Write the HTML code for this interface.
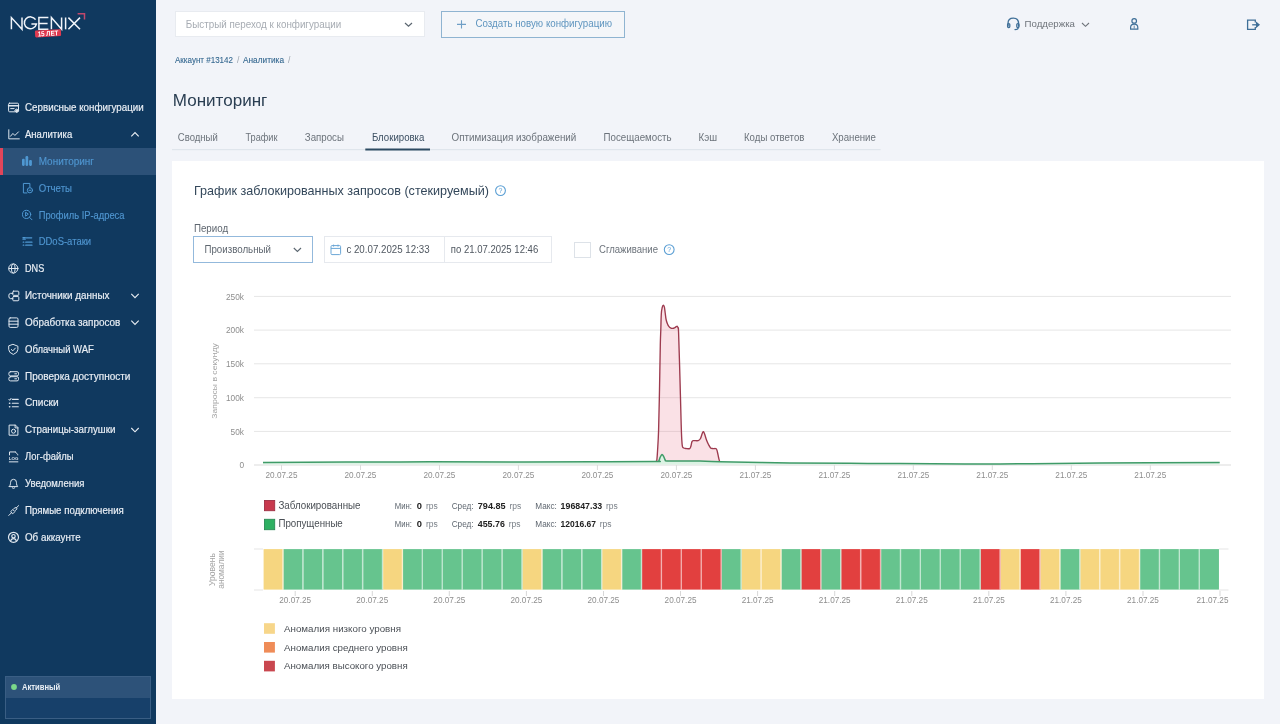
<!DOCTYPE html>
<html><head><meta charset="utf-8">
<style>
*{margin:0;padding:0;box-sizing:border-box}
html,body{width:1280px;height:724px;overflow:hidden;background:#f2f4f9;font-family:"Liberation Sans",sans-serif}
.a{position:absolute}
svg{position:absolute;left:0;top:0;will-change:transform}
</style></head><body>
<div class="a" style="left:0;top:0;width:156px;height:724px;background:#10395f"></div>
<div class="a" style="left:0;top:148px;width:156px;height:27px;background:#2c5178"></div>
<div class="a" style="left:0;top:148px;width:2.5px;height:27px;background:#e2455a"></div>
<div class="a" style="left:5px;top:676px;width:146px;height:43px;border:1px solid #3a5e84;background:#17406a"></div>
<div class="a" style="left:6px;top:677px;width:144px;height:21px;background:#2d5279"></div>
<div class="a" style="left:175px;top:10.8px;width:250px;height:26.6px;background:#fff;border:1px solid #e8ebf0"></div>
<div class="a" style="left:441px;top:11px;width:184px;height:27px;border:1px solid #8fb4d1;background:#f4f6f9"></div>
<div class="a" style="left:172px;top:161px;width:1092px;height:538px;background:#fff"></div>
<div class="a" style="left:193px;top:236px;width:120px;height:27px;border:1px solid #93b9dc;background:#fff"></div>
<div class="a" style="left:324px;top:236px;width:228px;height:27px;border:1px solid #e6e9ee;background:#fff"></div>
<div class="a" style="left:444px;top:236px;width:1px;height:27px;background:#e6e9ee"></div>
<div class="a" style="left:574px;top:242px;width:17px;height:16px;border:1px solid #dde2e8;background:#fff"></div>
<svg width="1280" height="724" viewBox="0 0 1280 724" font-family="Liberation Sans">
<g fill="none" stroke="#f1f5fa" stroke-width="1.5">
<path d="M11.4 29.3V17.6L22 29.2V17.6"/>
<path d="M35.6 19.6A6.1 5.9 0 1 0 36.4 24.1H31.4"/>
<path d="M48.4 17.6H38.9V29.2H48.4M38.9 23.5H47.6"/>
<path d="M51.4 29.3V17.6L61.6 29.2V17.6"/>
<path d="M65.6 17.5V29.3"/>
<path d="M68.4 17.6L80 29.2M80 17.6L68.4 29.2"/>
</g>
<path d="M77.6 13.7H84.5V19.6" fill="none" stroke="#c0486c" stroke-width="1.5"/>
<g transform="rotate(-3.3 48 33)"><rect x="35" y="29.8" width="26" height="7" rx="1.2" fill="#e03a50"/>
<text x="48" y="35.9" font-size="7" font-weight="bold" fill="#fff" text-anchor="middle" textLength="20.5" lengthAdjust="spacingAndGlyphs">15 ЛЕТ</text></g>
<text x="25.00" y="111.10" font-size="10.1" fill="#e9eef4" textLength="118.70" lengthAdjust="spacingAndGlyphs" stroke="#e9eef4" stroke-width="0.18">Сервисные конфигурации</text>
<text x="25.00" y="137.95" font-size="10.1" fill="#e9eef4" textLength="47.20" lengthAdjust="spacingAndGlyphs" stroke="#e9eef4" stroke-width="0.18">Аналитика</text>
<path d="M131.3 136.4L135 132.6L138.7 136.4" fill="none" stroke="#e9eef4" stroke-width="1.1"/>
<text x="38.70" y="164.80" font-size="10.1" fill="#4f95cf" textLength="55.30" lengthAdjust="spacingAndGlyphs" stroke="#4f95cf" stroke-width="0.15">Мониторинг</text>
<text x="38.70" y="191.65" font-size="10.1" fill="#4f95cf" textLength="33.30" lengthAdjust="spacingAndGlyphs" stroke="#4f95cf" stroke-width="0.15">Отчеты</text>
<text x="38.70" y="218.50" font-size="10.1" fill="#4f95cf" textLength="85.80" lengthAdjust="spacingAndGlyphs" stroke="#4f95cf" stroke-width="0.15">Профиль IP-адреса</text>
<text x="38.70" y="245.35" font-size="10.1" fill="#4f95cf" textLength="52.40" lengthAdjust="spacingAndGlyphs" stroke="#4f95cf" stroke-width="0.15">DDoS-атаки</text>
<text x="25.00" y="272.20" font-size="10.1" fill="#e9eef4" textLength="19.20" lengthAdjust="spacingAndGlyphs" stroke="#e9eef4" stroke-width="0.18">DNS</text>
<text x="25.00" y="299.05" font-size="10.1" fill="#e9eef4" textLength="84.50" lengthAdjust="spacingAndGlyphs" stroke="#e9eef4" stroke-width="0.18">Источники данных</text>
<path d="M131.3 293.8L135 297.6L138.7 293.8" fill="none" stroke="#e9eef4" stroke-width="1.1"/>
<text x="25.00" y="325.90" font-size="10.1" fill="#e9eef4" textLength="95.40" lengthAdjust="spacingAndGlyphs" stroke="#e9eef4" stroke-width="0.18">Обработка запросов</text>
<path d="M131.3 320.6L135 324.4L138.7 320.6" fill="none" stroke="#e9eef4" stroke-width="1.1"/>
<text x="25.00" y="352.75" font-size="10.1" fill="#e9eef4" textLength="68.90" lengthAdjust="spacingAndGlyphs" stroke="#e9eef4" stroke-width="0.18">Облачный WAF</text>
<text x="25.00" y="379.60" font-size="10.1" fill="#e9eef4" textLength="105.40" lengthAdjust="spacingAndGlyphs" stroke="#e9eef4" stroke-width="0.18">Проверка доступности</text>
<text x="25.00" y="406.45" font-size="10.1" fill="#e9eef4" textLength="33.60" lengthAdjust="spacingAndGlyphs" stroke="#e9eef4" stroke-width="0.18">Списки</text>
<text x="25.00" y="433.30" font-size="10.1" fill="#e9eef4" textLength="90.40" lengthAdjust="spacingAndGlyphs" stroke="#e9eef4" stroke-width="0.18">Страницы-заглушки</text>
<path d="M131.3 428.0L135 431.8L138.7 428.0" fill="none" stroke="#e9eef4" stroke-width="1.1"/>
<text x="25.00" y="460.15" font-size="10.1" fill="#e9eef4" textLength="48.40" lengthAdjust="spacingAndGlyphs" stroke="#e9eef4" stroke-width="0.18">Лог-файлы</text>
<text x="25.00" y="487.00" font-size="10.1" fill="#e9eef4" textLength="59.40" lengthAdjust="spacingAndGlyphs" stroke="#e9eef4" stroke-width="0.18">Уведомления</text>
<text x="25.00" y="513.85" font-size="10.1" fill="#e9eef4" textLength="98.80" lengthAdjust="spacingAndGlyphs" stroke="#e9eef4" stroke-width="0.18">Прямые подключения</text>
<text x="25.00" y="540.70" font-size="10.1" fill="#e9eef4" textLength="55.70" lengthAdjust="spacingAndGlyphs" stroke="#e9eef4" stroke-width="0.18">Об аккаунте</text>
<g transform="translate(8.3 102.40)" fill="none" stroke="#dfe7ef" stroke-width="1.0" stroke-linecap="round" stroke-linejoin="round"><rect x="0.3" y="0.8" width="9.9" height="8.6" rx="1"/><path d="M0.3 3.3H10.2" stroke-width="1.6"/><path d="M2.4 6.2H5.8"/><path d="M8.5 6.6L10.3 8.4L8.5 10.2L6.7 8.4Z" fill="#dfe7ef"/></g>
<g transform="translate(8.3 129.25)" fill="none" stroke="#dfe7ef" stroke-width="1.0" stroke-linecap="round" stroke-linejoin="round"><path d="M0.5 0.5V9.6H11"/><path d="M2.2 7L4.6 4.2L6.6 6.2L10.2 2.6"/></g>
<g transform="translate(21.6 156.10)" fill="none" stroke="#4f98d2" stroke-width="1.0" stroke-linecap="round" stroke-linejoin="round"><rect x="0.4" y="2.6" width="2.7" height="7.2" rx="1.1" fill="#4f98d2" stroke="none"/><rect x="3.9" y="0" width="2.7" height="9.8" rx="1.1" fill="#4f98d2" stroke="none"/><rect x="7.5" y="3.9" width="2.8" height="5.9" rx="1.1" fill="#4f98d2" stroke="none"/></g>
<g transform="translate(22.4 182.95)" fill="none" stroke="#4f98d2" stroke-width="1.0" stroke-linecap="round" stroke-linejoin="round"><path d="M7.5 4V0.5H1V10H4.5"/><circle cx="7.5" cy="7.3" r="2.6"/><path d="M6.6 7.3H8.4"/></g>
<g transform="translate(22 209.80)" fill="none" stroke="#4f98d2" stroke-width="1.0" stroke-linecap="round" stroke-linejoin="round"><circle cx="4.6" cy="4.6" r="4.1"/><path d="M7.6 7.6L10 10"/><path d="M3.6 2.8V6.4L6 4.6Z"/></g>
<g transform="translate(22.2 236.65)" fill="none" stroke="#4f98d2" stroke-width="1.0" stroke-linecap="round" stroke-linejoin="round"><path d="M0.8 1H3M0.8 2.5H3M4 1.2H9.5" stroke-width="1.3"/><path d="M1 5.5H1.6M1 8.5H1.6M3.5 5.5H9.8M3.5 8.5H9.8" stroke-width="1.2"/></g>
<g transform="translate(8.3 263.50)" fill="none" stroke="#dfe7ef" stroke-width="1.0" stroke-linecap="round" stroke-linejoin="round"><circle cx="5" cy="5" r="4.6"/><ellipse cx="5" cy="5" rx="1.9" ry="4.6"/><path d="M0.6 5H9.4"/></g>
<g transform="translate(8.3 290.35)" fill="none" stroke="#dfe7ef" stroke-width="1.0" stroke-linecap="round" stroke-linejoin="round"><rect x="4.5" y="0.8" width="6" height="4.2" rx="0.8"/><rect x="4.5" y="6.2" width="6" height="4.2" rx="0.8"/><path d="M4.5 3H2.2Q0.5 3 0.5 5.5Q0.5 8.3 2.2 8.3H4.5"/></g>
<g transform="translate(8.3 317.20)" fill="none" stroke="#dfe7ef" stroke-width="1.0" stroke-linecap="round" stroke-linejoin="round"><rect x="0.7" y="0.7" width="9" height="9.5" rx="1.2"/><path d="M0.7 4H9.7M0.7 7H9.7"/></g>
<g transform="translate(8.3 344.05)" fill="none" stroke="#dfe7ef" stroke-width="1.0" stroke-linecap="round" stroke-linejoin="round"><path d="M5 0.4L9.6 2.2V5.4Q9.6 8.6 5 10.4Q0.4 8.6 0.4 5.4V2.2Z"/><path d="M3 5.4L4.5 6.8L7.1 4"/></g>
<g transform="translate(8.3 370.90)" fill="none" stroke="#dfe7ef" stroke-width="1.0" stroke-linecap="round" stroke-linejoin="round"><rect x="0.6" y="0.8" width="9.6" height="4.2" rx="1.5"/><rect x="0.6" y="5.8" width="9.6" height="4.2" rx="1.5"/><path d="M6.5 2.9H8.3M6.5 7.9H8.3"/></g>
<g transform="translate(8.3 397.75)" fill="none" stroke="#dfe7ef" stroke-width="1.0" stroke-linecap="round" stroke-linejoin="round"><path d="M0.6 1.6L1.4 2.6L2.8 0.6" /><path d="M1.2 5.5H1.5M1.2 9H1.5" stroke-width="1.5"/><path d="M4 1.6H10M4 5.5H10M4 9H10" stroke-width="1.1"/></g>
<g transform="translate(8.3 424.60)" fill="none" stroke="#dfe7ef" stroke-width="1.0" stroke-linecap="round" stroke-linejoin="round"><path d="M6.8 0.5H0.8V10.6H9.6V3.3Z"/><path d="M6.8 0.5V3.3H9.6"/><circle cx="5.2" cy="6.6" r="2"/></g>
<g transform="translate(8.3 451.45)" fill="none" stroke="#dfe7ef" stroke-width="1.0" stroke-linecap="round" stroke-linejoin="round"><path d="M7 0.5H1.2V3.5M9.5 3.5V3L7 0.5M1 10.4H9.6"/><text x="5.3" y="8.2" font-size="4.4" font-weight="bold" fill="#dfe7ef" stroke="none" text-anchor="middle">LOG</text></g>
<g transform="translate(8.3 478.30)" fill="none" stroke="#dfe7ef" stroke-width="1.0" stroke-linecap="round" stroke-linejoin="round"><path d="M1 8.3H9.4Q8.2 7 8.2 5V4.4Q8.2 1 5.2 1Q2.2 1 2.2 4.4V5Q2.2 7 1 8.3Z"/><path d="M3.9 9.6Q5.2 10.8 6.5 9.6"/></g>
<g transform="translate(8.3 505.15)" fill="none" stroke="#dfe7ef" stroke-width="1.0" stroke-linecap="round" stroke-linejoin="round"><path d="M0.5 10.3L3 7.8M7.7 3L10.3 0.5"/><path d="M2.6 6.3L4.5 4.4L6.6 6.5L4.7 8.4Z"/><path d="M5.4 3.8L7.2 2L8.8 3.6L7 5.4"/></g>
<g transform="translate(8.3 532.00)" fill="none" stroke="#dfe7ef" stroke-width="1.2" stroke-linecap="round" stroke-linejoin="round"><circle cx="5.2" cy="5.3" r="5"/><circle cx="5.2" cy="4.2" r="1.7"/><path d="M2.4 9Q2.8 6.6 5.2 6.6Q7.6 6.6 8 9"/></g>
<g fill="none" stroke="#3f6f98" stroke-width="1.3" stroke-linecap="round"><path d="M1008 26V23.5Q1008 18.2 1013.3 18.2Q1018.6 18.2 1018.6 23.5V26"/><rect x="1007.6" y="23.6" width="2.2" height="4" rx="1"/><rect x="1016.8" y="23.6" width="2.2" height="4" rx="1"/><path d="M1018.3 27.8Q1018 29.6 1015 29.6"/></g>
<g fill="none" stroke="#3f6f98" stroke-width="1.2"><circle cx="1134.2" cy="20.9" r="2.3"/><path d="M1130.6 29.2V27.5Q1130.6 24.2 1134.2 24.2Q1137.8 24.2 1137.8 27.5V29.2Z"/><path d="M1134.2 25.5V28.5" stroke-width="0.8"/></g>
<g fill="none" stroke="#3f6f98" stroke-width="1.3"><path d="M1255.3 22.5V20.2H1247.6V29.3H1255.3V27"/><path d="M1252.2 24.8H1258.3"/><path d="M1256.6 22.8L1259 24.8L1256.6 26.8Z" fill="#3f6f98"/></g>
<text x="22.00" y="689.80" font-size="8.4" fill="#e9eef4" textLength="38.30" lengthAdjust="spacingAndGlyphs" font-weight="bold">Активный</text>
<circle cx="14" cy="687" r="2.9" fill="#7bd88a"/>
<text x="185.80" y="27.60" font-size="10" fill="#a7acb3" textLength="155.50" lengthAdjust="spacingAndGlyphs">Быстрый переход к конфигурации</text>
<path d="M405 23L408.5 26.3L412 23" fill="none" stroke="#5b6670" stroke-width="1.2"/>
<path d="M461.5 20.3V28.5M457 24.4H466" fill="none" stroke="#6f9fc6" stroke-width="1.1"/>
<text x="475.50" y="27.40" font-size="10" fill="#5f95bf" textLength="136.50" lengthAdjust="spacingAndGlyphs">Создать новую конфигурацию</text>
<text x="1024.60" y="26.90" font-size="9.8" fill="#6e737a" textLength="50.40" lengthAdjust="spacingAndGlyphs">Поддержка</text>
<path d="M1082 23L1085.5 26.3L1089 23" fill="none" stroke="#6e737a" stroke-width="1.1"/>
<text x="175.00" y="63.30" font-size="8.6" fill="#356890" textLength="58.00" lengthAdjust="spacingAndGlyphs" stroke="#356890" stroke-width="0.1">Аккаунт #13142</text>
<text x="237.00" y="63.30" font-size="8.6" fill="#9aa3ad">/</text>
<text x="243.00" y="63.30" font-size="8.6" fill="#356890" textLength="41.00" lengthAdjust="spacingAndGlyphs" stroke="#356890" stroke-width="0.1">Аналитика</text>
<text x="288.00" y="63.30" font-size="8.6" fill="#9aa3ad">/</text>
<text x="172.80" y="106.10" font-size="16.4" fill="#2a3e52" textLength="94.50" lengthAdjust="spacingAndGlyphs">Мониторинг</text>
<rect x="172" y="149" width="708.6" height="1.2" fill="#dfe5ec"/>
<rect x="365.3" y="148.5" width="64.7" height="2" fill="#2d4a62"/>
<text x="177.80" y="141.30" font-size="10" fill="#6c737b" textLength="40.00" lengthAdjust="spacingAndGlyphs">Сводный</text>
<text x="245.50" y="141.30" font-size="10" fill="#6c737b" textLength="32.00" lengthAdjust="spacingAndGlyphs">Трафик</text>
<text x="304.80" y="141.30" font-size="10" fill="#6c737b" textLength="39.10" lengthAdjust="spacingAndGlyphs">Запросы</text>
<text x="371.90" y="141.30" font-size="10" fill="#3c4f62" textLength="52.50" lengthAdjust="spacingAndGlyphs">Блокировка</text>
<text x="451.60" y="141.30" font-size="10" fill="#6c737b" textLength="124.70" lengthAdjust="spacingAndGlyphs">Оптимизация изображений</text>
<text x="603.60" y="141.30" font-size="10" fill="#6c737b" textLength="68.00" lengthAdjust="spacingAndGlyphs">Посещаемость</text>
<text x="698.50" y="141.30" font-size="10" fill="#6c737b" textLength="18.50" lengthAdjust="spacingAndGlyphs">Кэш</text>
<text x="744.00" y="141.30" font-size="10" fill="#6c737b" textLength="60.40" lengthAdjust="spacingAndGlyphs">Коды ответов</text>
<text x="831.90" y="141.30" font-size="10" fill="#6c737b" textLength="44.00" lengthAdjust="spacingAndGlyphs">Хранение</text>
<text x="194.00" y="195.00" font-size="12.6" fill="#33475a" textLength="295.00" lengthAdjust="spacingAndGlyphs">График заблокированных запросов (стекируемый)</text>
<circle cx="500.5" cy="190.6" r="4.9" fill="none" stroke="#5b9fd4" stroke-width="1.1"/><text x="500.5" y="193.2" font-size="7" fill="#5b9fd4" text-anchor="middle">?</text>
<text x="193.90" y="231.50" font-size="10" fill="#5f6770" textLength="34.30" lengthAdjust="spacingAndGlyphs">Период</text>
<text x="204.40" y="253.00" font-size="10" fill="#5f6770" textLength="66.60" lengthAdjust="spacingAndGlyphs">Произвольный</text>
<path d="M293.8 248L297.4 251.5L301 248" fill="none" stroke="#5b6670" stroke-width="1.1"/>
<rect x="331" y="245.6" width="9.6" height="9" rx="1" fill="none" stroke="#6aa6d6" stroke-width="1"/><path d="M331 248.4H340.6M333.6 244.6V246.6M338 244.6V246.6" stroke="#6aa6d6" stroke-width="1"/>
<text x="346.40" y="253.00" font-size="10" fill="#4f5760" textLength="83.30" lengthAdjust="spacingAndGlyphs">с 20.07.2025 12:33</text>
<text x="450.80" y="253.00" font-size="10" fill="#4f5760" textLength="87.40" lengthAdjust="spacingAndGlyphs">по 21.07.2025 12:46</text>
<text x="599.00" y="253.00" font-size="10" fill="#6c737b" textLength="59.00" lengthAdjust="spacingAndGlyphs">Сглаживание</text>
<circle cx="669.2" cy="249.6" r="4.9" fill="none" stroke="#5b9fd4" stroke-width="1.1"/><text x="669.2" y="252.2" font-size="7" fill="#5b9fd4" text-anchor="middle">?</text>
<rect x="254" y="295.9" width="977" height="1" fill="#e6e6e6"/>
<text x="244.00" y="299.70" font-size="8.3" fill="#8e8e8e" text-anchor="end">250k</text>
<rect x="254" y="329.6" width="977" height="1" fill="#e6e6e6"/>
<text x="244.00" y="333.40" font-size="8.3" fill="#8e8e8e" text-anchor="end">200k</text>
<rect x="254" y="363.3" width="977" height="1" fill="#e6e6e6"/>
<text x="244.00" y="367.10" font-size="8.3" fill="#8e8e8e" text-anchor="end">150k</text>
<rect x="254" y="397.2" width="977" height="1" fill="#e6e6e6"/>
<text x="244.00" y="401.00" font-size="8.3" fill="#8e8e8e" text-anchor="end">100k</text>
<rect x="254" y="430.9" width="977" height="1" fill="#e6e6e6"/>
<text x="244.00" y="434.70" font-size="8.3" fill="#8e8e8e" text-anchor="end">50k</text>
<rect x="254" y="464.5" width="977" height="1" fill="#dcdcdc"/>
<text x="244.00" y="468.30" font-size="8.3" fill="#8e8e8e" text-anchor="end">0</text>
<rect x="281.0" y="465" width="1" height="5" fill="#dcdcdc"/>
<text x="281.50" y="478.00" font-size="8.2" fill="#8e8e8e" textLength="31.90" lengthAdjust="spacingAndGlyphs" text-anchor="middle">20.07.25</text>
<rect x="360.0" y="465" width="1" height="5" fill="#dcdcdc"/>
<text x="360.48" y="478.00" font-size="8.2" fill="#8e8e8e" textLength="31.90" lengthAdjust="spacingAndGlyphs" text-anchor="middle">20.07.25</text>
<rect x="439.0" y="465" width="1" height="5" fill="#dcdcdc"/>
<text x="439.46" y="478.00" font-size="8.2" fill="#8e8e8e" textLength="31.90" lengthAdjust="spacingAndGlyphs" text-anchor="middle">20.07.25</text>
<rect x="517.9" y="465" width="1" height="5" fill="#dcdcdc"/>
<text x="518.44" y="478.00" font-size="8.2" fill="#8e8e8e" textLength="31.90" lengthAdjust="spacingAndGlyphs" text-anchor="middle">20.07.25</text>
<rect x="596.9" y="465" width="1" height="5" fill="#dcdcdc"/>
<text x="597.42" y="478.00" font-size="8.2" fill="#8e8e8e" textLength="31.90" lengthAdjust="spacingAndGlyphs" text-anchor="middle">20.07.25</text>
<rect x="675.9" y="465" width="1" height="5" fill="#dcdcdc"/>
<text x="676.40" y="478.00" font-size="8.2" fill="#8e8e8e" textLength="31.90" lengthAdjust="spacingAndGlyphs" text-anchor="middle">20.07.25</text>
<rect x="754.9" y="465" width="1" height="5" fill="#dcdcdc"/>
<text x="755.38" y="478.00" font-size="8.2" fill="#8e8e8e" textLength="31.90" lengthAdjust="spacingAndGlyphs" text-anchor="middle">21.07.25</text>
<rect x="833.9" y="465" width="1" height="5" fill="#dcdcdc"/>
<text x="834.36" y="478.00" font-size="8.2" fill="#8e8e8e" textLength="31.90" lengthAdjust="spacingAndGlyphs" text-anchor="middle">21.07.25</text>
<rect x="912.8" y="465" width="1" height="5" fill="#dcdcdc"/>
<text x="913.34" y="478.00" font-size="8.2" fill="#8e8e8e" textLength="31.90" lengthAdjust="spacingAndGlyphs" text-anchor="middle">21.07.25</text>
<rect x="991.8" y="465" width="1" height="5" fill="#dcdcdc"/>
<text x="992.32" y="478.00" font-size="8.2" fill="#8e8e8e" textLength="31.90" lengthAdjust="spacingAndGlyphs" text-anchor="middle">21.07.25</text>
<rect x="1070.8" y="465" width="1" height="5" fill="#dcdcdc"/>
<text x="1071.30" y="478.00" font-size="8.2" fill="#8e8e8e" textLength="31.90" lengthAdjust="spacingAndGlyphs" text-anchor="middle">21.07.25</text>
<rect x="1149.8" y="465" width="1" height="5" fill="#dcdcdc"/>
<text x="1150.28" y="478.00" font-size="8.2" fill="#8e8e8e" textLength="31.90" lengthAdjust="spacingAndGlyphs" text-anchor="middle">21.07.25</text>
<text x="0.00" y="0.00" font-size="8" fill="#a4a4a4" textLength="75.50" lengthAdjust="spacingAndGlyphs" text-anchor="middle" transform="translate(216.6 381) rotate(-90)">Запросы в секунду</text>
<path d="M655.50 461.40C655.70 461.33 656.35 462.90 656.70 461.00C657.05 459.10 657.28 455.17 657.60 450.00C657.92 444.83 658.28 440.00 658.60 430.00C658.92 420.00 659.22 404.17 659.50 390.00C659.78 375.83 660.08 355.00 660.30 345.00C660.52 335.00 660.63 335.17 660.80 330.00C660.97 324.83 661.07 317.75 661.30 314.00C661.53 310.25 661.85 308.97 662.20 307.50C662.55 306.03 663.03 305.25 663.40 305.20C663.77 305.15 664.10 305.90 664.40 307.20C664.70 308.50 664.92 310.95 665.20 313.00C665.48 315.05 665.73 317.70 666.10 319.50C666.47 321.30 666.92 322.62 667.40 323.80C667.88 324.98 668.40 325.88 669.00 326.60C669.60 327.32 670.42 327.80 671.00 328.10C671.58 328.40 671.92 328.43 672.50 328.40C673.08 328.37 673.88 328.18 674.50 327.90C675.12 327.62 675.75 326.97 676.20 326.70C676.65 326.43 676.88 326.05 677.20 326.30C677.52 326.55 677.87 327.08 678.10 328.20C678.33 329.32 678.28 324.37 678.60 333.00C678.92 341.63 679.57 364.67 680.00 380.00C680.43 395.33 680.90 415.00 681.20 425.00C681.50 435.00 681.60 436.45 681.80 440.00C682.00 443.55 682.08 444.97 682.40 446.30C682.72 447.63 683.10 447.63 683.70 448.00C684.30 448.37 685.02 448.40 686.00 448.50C686.98 448.60 688.80 448.93 689.60 448.60C690.40 448.27 690.40 447.67 690.80 446.50C691.20 445.33 691.55 442.58 692.00 441.60C692.45 440.62 692.47 440.77 693.50 440.60C694.53 440.43 697.03 440.95 698.20 440.60C699.37 440.25 699.80 439.77 700.50 438.50C701.20 437.23 701.92 434.13 702.40 433.00C702.88 431.87 703.03 431.53 703.40 431.70C703.77 431.87 704.08 432.62 704.60 434.00C705.12 435.38 705.85 438.25 706.50 440.00C707.15 441.75 707.82 443.18 708.50 444.50C709.18 445.82 709.85 447.22 710.60 447.90C711.35 448.58 712.07 448.45 713.00 448.60C713.93 448.75 715.47 448.23 716.20 448.80C716.93 449.37 717.00 450.55 717.40 452.00C717.80 453.45 718.23 455.95 718.60 457.50C718.97 459.05 719.28 460.62 719.60 461.30C719.92 461.98 720.35 461.55 720.50 461.60Z" fill="#e0506a" fill-opacity="0.17" stroke="none"/>
<path d="M655.50 461.40C655.70 461.33 656.35 462.90 656.70 461.00C657.05 459.10 657.28 455.17 657.60 450.00C657.92 444.83 658.28 440.00 658.60 430.00C658.92 420.00 659.22 404.17 659.50 390.00C659.78 375.83 660.08 355.00 660.30 345.00C660.52 335.00 660.63 335.17 660.80 330.00C660.97 324.83 661.07 317.75 661.30 314.00C661.53 310.25 661.85 308.97 662.20 307.50C662.55 306.03 663.03 305.25 663.40 305.20C663.77 305.15 664.10 305.90 664.40 307.20C664.70 308.50 664.92 310.95 665.20 313.00C665.48 315.05 665.73 317.70 666.10 319.50C666.47 321.30 666.92 322.62 667.40 323.80C667.88 324.98 668.40 325.88 669.00 326.60C669.60 327.32 670.42 327.80 671.00 328.10C671.58 328.40 671.92 328.43 672.50 328.40C673.08 328.37 673.88 328.18 674.50 327.90C675.12 327.62 675.75 326.97 676.20 326.70C676.65 326.43 676.88 326.05 677.20 326.30C677.52 326.55 677.87 327.08 678.10 328.20C678.33 329.32 678.28 324.37 678.60 333.00C678.92 341.63 679.57 364.67 680.00 380.00C680.43 395.33 680.90 415.00 681.20 425.00C681.50 435.00 681.60 436.45 681.80 440.00C682.00 443.55 682.08 444.97 682.40 446.30C682.72 447.63 683.10 447.63 683.70 448.00C684.30 448.37 685.02 448.40 686.00 448.50C686.98 448.60 688.80 448.93 689.60 448.60C690.40 448.27 690.40 447.67 690.80 446.50C691.20 445.33 691.55 442.58 692.00 441.60C692.45 440.62 692.47 440.77 693.50 440.60C694.53 440.43 697.03 440.95 698.20 440.60C699.37 440.25 699.80 439.77 700.50 438.50C701.20 437.23 701.92 434.13 702.40 433.00C702.88 431.87 703.03 431.53 703.40 431.70C703.77 431.87 704.08 432.62 704.60 434.00C705.12 435.38 705.85 438.25 706.50 440.00C707.15 441.75 707.82 443.18 708.50 444.50C709.18 445.82 709.85 447.22 710.60 447.90C711.35 448.58 712.07 448.45 713.00 448.60C713.93 448.75 715.47 448.23 716.20 448.80C716.93 449.37 717.00 450.55 717.40 452.00C717.80 453.45 718.23 455.95 718.60 457.50C718.97 459.05 719.28 460.62 719.60 461.30C719.92 461.98 720.35 461.55 720.50 461.60" fill="none" stroke="#9d3a4e" stroke-width="1.35" stroke-linejoin="round"/>
<path d="M263.00 462.50C285.83 462.40 356.33 462.00 400.00 461.90C443.67 461.80 491.67 461.93 525.00 461.90C558.33 461.87 578.33 461.77 600.00 461.70C621.67 461.63 645.23 461.60 655.00 461.50C664.77 461.40 657.73 461.82 658.60 461.10C659.47 460.38 659.63 458.28 660.20 457.20C660.77 456.12 661.42 454.70 662.00 454.60C662.58 454.50 663.17 455.70 663.70 456.60C664.23 457.50 664.68 459.28 665.20 460.00C665.72 460.72 664.33 460.75 666.80 460.90C669.27 461.05 674.47 460.88 680.00 460.90C685.53 460.92 693.33 460.85 700.00 461.00C706.67 461.15 705.00 461.47 720.00 461.80C735.00 462.13 768.33 462.75 790.00 463.00C811.67 463.25 831.67 463.20 850.00 463.30C868.33 463.40 875.00 463.50 900.00 463.60C925.00 463.70 966.67 463.98 1000.00 463.90C1033.33 463.82 1063.38 463.35 1100.00 463.10C1136.62 462.85 1199.75 462.52 1219.70 462.40L1219.7 464.5L263 464.5Z" fill="#dcf3e4" stroke="none"/>
<path d="M263.00 462.50C285.83 462.40 356.33 462.00 400.00 461.90C443.67 461.80 491.67 461.93 525.00 461.90C558.33 461.87 578.33 461.77 600.00 461.70C621.67 461.63 645.23 461.60 655.00 461.50C664.77 461.40 657.73 461.82 658.60 461.10C659.47 460.38 659.63 458.28 660.20 457.20C660.77 456.12 661.42 454.70 662.00 454.60C662.58 454.50 663.17 455.70 663.70 456.60C664.23 457.50 664.68 459.28 665.20 460.00C665.72 460.72 664.33 460.75 666.80 460.90C669.27 461.05 674.47 460.88 680.00 460.90C685.53 460.92 693.33 460.85 700.00 461.00C706.67 461.15 705.00 461.47 720.00 461.80C735.00 462.13 768.33 462.75 790.00 463.00C811.67 463.25 831.67 463.20 850.00 463.30C868.33 463.40 875.00 463.50 900.00 463.60C925.00 463.70 966.67 463.98 1000.00 463.90C1033.33 463.82 1063.38 463.35 1100.00 463.10C1136.62 462.85 1199.75 462.52 1219.70 462.40" fill="none" stroke="#3f9b68" stroke-width="1.5" stroke-linejoin="round"/>
<rect x="264.5" y="500.5" width="10.2" height="10.2" fill="#c8394e" stroke="#9e3045" stroke-width="0.9"/>
<rect x="264.5" y="519.3" width="10.2" height="10.4" fill="#2eb062" stroke="#2a8a56" stroke-width="0.9"/>
<text x="278.40" y="508.60" font-size="10" fill="#4a4f55" textLength="82.10" lengthAdjust="spacingAndGlyphs">Заблокированные</text>
<text x="278.40" y="527.20" font-size="10" fill="#4a4f55" textLength="64.40" lengthAdjust="spacingAndGlyphs">Пропущенные</text>
<text x="394.80" y="508.60" font-size="8.2" fill="#5f6770" textLength="17.20" lengthAdjust="spacingAndGlyphs">Мин:</text>
<text x="416.70" y="508.60" font-size="9" fill="#222" textLength="5.20" lengthAdjust="spacingAndGlyphs" font-weight="bold">0</text>
<text x="426.00" y="508.60" font-size="8.4" fill="#7a8088" textLength="11.80" lengthAdjust="spacingAndGlyphs">rps</text>
<text x="451.70" y="508.60" font-size="8.2" fill="#5f6770" textLength="21.90" lengthAdjust="spacingAndGlyphs">Сред:</text>
<text x="477.80" y="508.60" font-size="9" fill="#222" textLength="27.80" lengthAdjust="spacingAndGlyphs" font-weight="bold">794.85</text>
<text x="509.50" y="508.60" font-size="8.4" fill="#7a8088" textLength="11.80" lengthAdjust="spacingAndGlyphs">rps</text>
<text x="535.30" y="508.60" font-size="8.2" fill="#5f6770" textLength="21.60" lengthAdjust="spacingAndGlyphs">Макс:</text>
<text x="560.60" y="508.60" font-size="9" fill="#222" textLength="41.60" lengthAdjust="spacingAndGlyphs" font-weight="bold">196847.33</text>
<text x="606.00" y="508.60" font-size="8.4" fill="#7a8088" textLength="11.80" lengthAdjust="spacingAndGlyphs">rps</text>
<text x="394.80" y="527.20" font-size="8.2" fill="#5f6770" textLength="17.20" lengthAdjust="spacingAndGlyphs">Мин:</text>
<text x="416.70" y="527.20" font-size="9" fill="#222" textLength="5.20" lengthAdjust="spacingAndGlyphs" font-weight="bold">0</text>
<text x="426.00" y="527.20" font-size="8.4" fill="#7a8088" textLength="11.80" lengthAdjust="spacingAndGlyphs">rps</text>
<text x="451.70" y="527.20" font-size="8.2" fill="#5f6770" textLength="21.90" lengthAdjust="spacingAndGlyphs">Сред:</text>
<text x="477.80" y="527.20" font-size="9" fill="#222" textLength="27.00" lengthAdjust="spacingAndGlyphs" font-weight="bold">455.76</text>
<text x="508.70" y="527.20" font-size="8.4" fill="#7a8088" textLength="11.80" lengthAdjust="spacingAndGlyphs">rps</text>
<text x="535.30" y="527.20" font-size="8.2" fill="#5f6770" textLength="21.60" lengthAdjust="spacingAndGlyphs">Макс:</text>
<text x="560.60" y="527.20" font-size="9" fill="#222" textLength="35.40" lengthAdjust="spacingAndGlyphs" font-weight="bold">12016.67</text>
<text x="599.80" y="527.20" font-size="8.4" fill="#7a8088" textLength="11.80" lengthAdjust="spacingAndGlyphs">rps</text>
<rect x="263.60" y="549.1" width="19.97" height="40.5" fill="#f6d680"/>
<rect x="283.52" y="549.1" width="19.97" height="40.5" fill="#66c48e"/>
<rect x="303.44" y="549.1" width="19.97" height="40.5" fill="#66c48e"/>
<rect x="323.36" y="549.1" width="19.97" height="40.5" fill="#66c48e"/>
<rect x="343.29" y="549.1" width="19.97" height="40.5" fill="#66c48e"/>
<rect x="363.21" y="549.1" width="19.97" height="40.5" fill="#66c48e"/>
<rect x="383.13" y="549.1" width="19.97" height="40.5" fill="#f6d680"/>
<rect x="403.05" y="549.1" width="19.97" height="40.5" fill="#66c48e"/>
<rect x="422.97" y="549.1" width="19.97" height="40.5" fill="#66c48e"/>
<rect x="442.89" y="549.1" width="19.97" height="40.5" fill="#66c48e"/>
<rect x="462.81" y="549.1" width="19.97" height="40.5" fill="#66c48e"/>
<rect x="482.73" y="549.1" width="19.97" height="40.5" fill="#66c48e"/>
<rect x="502.66" y="549.1" width="19.97" height="40.5" fill="#66c48e"/>
<rect x="522.58" y="549.1" width="19.97" height="40.5" fill="#f6d680"/>
<rect x="542.50" y="549.1" width="19.97" height="40.5" fill="#66c48e"/>
<rect x="562.42" y="549.1" width="19.97" height="40.5" fill="#66c48e"/>
<rect x="582.34" y="549.1" width="19.97" height="40.5" fill="#66c48e"/>
<rect x="602.26" y="549.1" width="19.97" height="40.5" fill="#f6d680"/>
<rect x="622.18" y="549.1" width="19.97" height="40.5" fill="#66c48e"/>
<rect x="642.10" y="549.1" width="19.97" height="40.5" fill="#e2403f"/>
<rect x="662.03" y="549.1" width="19.97" height="40.5" fill="#e2403f"/>
<rect x="681.95" y="549.1" width="19.97" height="40.5" fill="#e2403f"/>
<rect x="701.87" y="549.1" width="19.97" height="40.5" fill="#e2403f"/>
<rect x="721.79" y="549.1" width="19.97" height="40.5" fill="#66c48e"/>
<rect x="741.71" y="549.1" width="19.97" height="40.5" fill="#f6d680"/>
<rect x="761.63" y="549.1" width="19.97" height="40.5" fill="#f6d680"/>
<rect x="781.55" y="549.1" width="19.97" height="40.5" fill="#66c48e"/>
<rect x="801.47" y="549.1" width="19.97" height="40.5" fill="#e2403f"/>
<rect x="821.40" y="549.1" width="19.97" height="40.5" fill="#66c48e"/>
<rect x="841.32" y="549.1" width="19.97" height="40.5" fill="#e2403f"/>
<rect x="861.24" y="549.1" width="19.97" height="40.5" fill="#e2403f"/>
<rect x="881.16" y="549.1" width="19.97" height="40.5" fill="#66c48e"/>
<rect x="901.08" y="549.1" width="19.97" height="40.5" fill="#66c48e"/>
<rect x="921.00" y="549.1" width="19.97" height="40.5" fill="#66c48e"/>
<rect x="940.92" y="549.1" width="19.97" height="40.5" fill="#66c48e"/>
<rect x="960.84" y="549.1" width="19.97" height="40.5" fill="#66c48e"/>
<rect x="980.77" y="549.1" width="19.97" height="40.5" fill="#e2403f"/>
<rect x="1000.69" y="549.1" width="19.97" height="40.5" fill="#f6d680"/>
<rect x="1020.61" y="549.1" width="19.97" height="40.5" fill="#e2403f"/>
<rect x="1040.53" y="549.1" width="19.97" height="40.5" fill="#f6d680"/>
<rect x="1060.45" y="549.1" width="19.97" height="40.5" fill="#66c48e"/>
<rect x="1080.37" y="549.1" width="19.97" height="40.5" fill="#f6d680"/>
<rect x="1100.29" y="549.1" width="19.97" height="40.5" fill="#f6d680"/>
<rect x="1120.21" y="549.1" width="19.97" height="40.5" fill="#f6d680"/>
<rect x="1140.14" y="549.1" width="19.97" height="40.5" fill="#66c48e"/>
<rect x="1160.06" y="549.1" width="19.97" height="40.5" fill="#66c48e"/>
<rect x="1179.98" y="549.1" width="19.97" height="40.5" fill="#66c48e"/>
<rect x="1199.90" y="549.1" width="19.05" height="40.5" fill="#66c48e"/>
<rect x="282.22" y="549.1" width="1.3" height="40.5" fill="#fff" fill-opacity="0.6"/>
<rect x="302.14" y="549.1" width="1.3" height="40.5" fill="#fff" fill-opacity="0.6"/>
<rect x="322.06" y="549.1" width="1.3" height="40.5" fill="#fff" fill-opacity="0.6"/>
<rect x="341.99" y="549.1" width="1.3" height="40.5" fill="#fff" fill-opacity="0.6"/>
<rect x="361.91" y="549.1" width="1.3" height="40.5" fill="#fff" fill-opacity="0.6"/>
<rect x="381.83" y="549.1" width="1.3" height="40.5" fill="#fff" fill-opacity="0.6"/>
<rect x="401.75" y="549.1" width="1.3" height="40.5" fill="#fff" fill-opacity="0.6"/>
<rect x="421.67" y="549.1" width="1.3" height="40.5" fill="#fff" fill-opacity="0.6"/>
<rect x="441.59" y="549.1" width="1.3" height="40.5" fill="#fff" fill-opacity="0.6"/>
<rect x="461.51" y="549.1" width="1.3" height="40.5" fill="#fff" fill-opacity="0.6"/>
<rect x="481.43" y="549.1" width="1.3" height="40.5" fill="#fff" fill-opacity="0.6"/>
<rect x="501.36" y="549.1" width="1.3" height="40.5" fill="#fff" fill-opacity="0.6"/>
<rect x="521.28" y="549.1" width="1.3" height="40.5" fill="#fff" fill-opacity="0.6"/>
<rect x="541.20" y="549.1" width="1.3" height="40.5" fill="#fff" fill-opacity="0.6"/>
<rect x="561.12" y="549.1" width="1.3" height="40.5" fill="#fff" fill-opacity="0.6"/>
<rect x="581.04" y="549.1" width="1.3" height="40.5" fill="#fff" fill-opacity="0.6"/>
<rect x="600.96" y="549.1" width="1.3" height="40.5" fill="#fff" fill-opacity="0.6"/>
<rect x="620.88" y="549.1" width="1.3" height="40.5" fill="#fff" fill-opacity="0.6"/>
<rect x="640.80" y="549.1" width="1.3" height="40.5" fill="#fff" fill-opacity="0.6"/>
<rect x="660.73" y="549.1" width="1.3" height="40.5" fill="#fff" fill-opacity="0.6"/>
<rect x="680.65" y="549.1" width="1.3" height="40.5" fill="#fff" fill-opacity="0.6"/>
<rect x="700.57" y="549.1" width="1.3" height="40.5" fill="#fff" fill-opacity="0.6"/>
<rect x="720.49" y="549.1" width="1.3" height="40.5" fill="#fff" fill-opacity="0.6"/>
<rect x="740.41" y="549.1" width="1.3" height="40.5" fill="#fff" fill-opacity="0.6"/>
<rect x="760.33" y="549.1" width="1.3" height="40.5" fill="#fff" fill-opacity="0.6"/>
<rect x="780.25" y="549.1" width="1.3" height="40.5" fill="#fff" fill-opacity="0.6"/>
<rect x="800.17" y="549.1" width="1.3" height="40.5" fill="#fff" fill-opacity="0.6"/>
<rect x="820.10" y="549.1" width="1.3" height="40.5" fill="#fff" fill-opacity="0.6"/>
<rect x="840.02" y="549.1" width="1.3" height="40.5" fill="#fff" fill-opacity="0.6"/>
<rect x="859.94" y="549.1" width="1.3" height="40.5" fill="#fff" fill-opacity="0.6"/>
<rect x="879.86" y="549.1" width="1.3" height="40.5" fill="#fff" fill-opacity="0.6"/>
<rect x="899.78" y="549.1" width="1.3" height="40.5" fill="#fff" fill-opacity="0.6"/>
<rect x="919.70" y="549.1" width="1.3" height="40.5" fill="#fff" fill-opacity="0.6"/>
<rect x="939.62" y="549.1" width="1.3" height="40.5" fill="#fff" fill-opacity="0.6"/>
<rect x="959.54" y="549.1" width="1.3" height="40.5" fill="#fff" fill-opacity="0.6"/>
<rect x="979.47" y="549.1" width="1.3" height="40.5" fill="#fff" fill-opacity="0.6"/>
<rect x="999.39" y="549.1" width="1.3" height="40.5" fill="#fff" fill-opacity="0.6"/>
<rect x="1019.31" y="549.1" width="1.3" height="40.5" fill="#fff" fill-opacity="0.6"/>
<rect x="1039.23" y="549.1" width="1.3" height="40.5" fill="#fff" fill-opacity="0.6"/>
<rect x="1059.15" y="549.1" width="1.3" height="40.5" fill="#fff" fill-opacity="0.6"/>
<rect x="1079.07" y="549.1" width="1.3" height="40.5" fill="#fff" fill-opacity="0.6"/>
<rect x="1098.99" y="549.1" width="1.3" height="40.5" fill="#fff" fill-opacity="0.6"/>
<rect x="1118.91" y="549.1" width="1.3" height="40.5" fill="#fff" fill-opacity="0.6"/>
<rect x="1138.84" y="549.1" width="1.3" height="40.5" fill="#fff" fill-opacity="0.6"/>
<rect x="1158.76" y="549.1" width="1.3" height="40.5" fill="#fff" fill-opacity="0.6"/>
<rect x="1178.68" y="549.1" width="1.3" height="40.5" fill="#fff" fill-opacity="0.6"/>
<rect x="1198.60" y="549.1" width="1.3" height="40.5" fill="#fff" fill-opacity="0.6"/>
<g fill="#dedede"><rect x="254" y="548.6" width="9" height="0.8"/><rect x="254" y="589.6" width="9" height="0.8"/><rect x="1219" y="548.6" width="9.5" height="0.8"/><rect x="1219" y="589.6" width="9.5" height="0.8"/></g>
<rect x="294.7" y="591" width="1" height="5" fill="#d8d8d8"/>
<text x="295.20" y="603.00" font-size="8.2" fill="#8e8e8e" textLength="31.90" lengthAdjust="spacingAndGlyphs" text-anchor="middle">20.07.25</text>
<rect x="371.8" y="591" width="1" height="5" fill="#d8d8d8"/>
<text x="372.27" y="603.00" font-size="8.2" fill="#8e8e8e" textLength="31.90" lengthAdjust="spacingAndGlyphs" text-anchor="middle">20.07.25</text>
<rect x="448.8" y="591" width="1" height="5" fill="#d8d8d8"/>
<text x="449.34" y="603.00" font-size="8.2" fill="#8e8e8e" textLength="31.90" lengthAdjust="spacingAndGlyphs" text-anchor="middle">20.07.25</text>
<rect x="525.9" y="591" width="1" height="5" fill="#d8d8d8"/>
<text x="526.41" y="603.00" font-size="8.2" fill="#8e8e8e" textLength="31.90" lengthAdjust="spacingAndGlyphs" text-anchor="middle">20.07.25</text>
<rect x="603.0" y="591" width="1" height="5" fill="#d8d8d8"/>
<text x="603.48" y="603.00" font-size="8.2" fill="#8e8e8e" textLength="31.90" lengthAdjust="spacingAndGlyphs" text-anchor="middle">20.07.25</text>
<rect x="680.0" y="591" width="1" height="5" fill="#d8d8d8"/>
<text x="680.55" y="603.00" font-size="8.2" fill="#8e8e8e" textLength="31.90" lengthAdjust="spacingAndGlyphs" text-anchor="middle">20.07.25</text>
<rect x="757.1" y="591" width="1" height="5" fill="#d8d8d8"/>
<text x="757.62" y="603.00" font-size="8.2" fill="#8e8e8e" textLength="31.90" lengthAdjust="spacingAndGlyphs" text-anchor="middle">21.07.25</text>
<rect x="834.2" y="591" width="1" height="5" fill="#d8d8d8"/>
<text x="834.69" y="603.00" font-size="8.2" fill="#8e8e8e" textLength="31.90" lengthAdjust="spacingAndGlyphs" text-anchor="middle">21.07.25</text>
<rect x="911.3" y="591" width="1" height="5" fill="#d8d8d8"/>
<text x="911.76" y="603.00" font-size="8.2" fill="#8e8e8e" textLength="31.90" lengthAdjust="spacingAndGlyphs" text-anchor="middle">21.07.25</text>
<rect x="988.3" y="591" width="1" height="5" fill="#d8d8d8"/>
<text x="988.83" y="603.00" font-size="8.2" fill="#8e8e8e" textLength="31.90" lengthAdjust="spacingAndGlyphs" text-anchor="middle">21.07.25</text>
<rect x="1065.4" y="591" width="1" height="5" fill="#d8d8d8"/>
<text x="1065.90" y="603.00" font-size="8.2" fill="#8e8e8e" textLength="31.90" lengthAdjust="spacingAndGlyphs" text-anchor="middle">21.07.25</text>
<rect x="1142.5" y="591" width="1" height="5" fill="#d8d8d8"/>
<text x="1142.97" y="603.00" font-size="8.2" fill="#8e8e8e" textLength="31.90" lengthAdjust="spacingAndGlyphs" text-anchor="middle">21.07.25</text>
<rect x="1219.5" y="591" width="1" height="5" fill="#d8d8d8"/>
<text x="1212.50" y="603.00" font-size="8.2" fill="#8e8e8e" textLength="31.90" lengthAdjust="spacingAndGlyphs" text-anchor="middle">21.07.25</text>
<text x="0.00" y="0.00" font-size="8.6" fill="#a4a4a4" textLength="33.00" lengthAdjust="spacingAndGlyphs" text-anchor="middle" transform="translate(215 569.5) rotate(-90)">Уровень</text>
<text x="0.00" y="0.00" font-size="8.6" fill="#a4a4a4" textLength="38.30" lengthAdjust="spacingAndGlyphs" text-anchor="middle" transform="translate(224.3 569.6) rotate(-90)">аномалии</text>
<rect x="264" y="623.2" width="10.9" height="10.6" fill="#f7d68a"/>
<text x="284.00" y="631.70" font-size="9.7" fill="#4a4f55" textLength="117.00" lengthAdjust="spacingAndGlyphs">Аномалия низкого уровня</text>
<rect x="264" y="642.0" width="10.9" height="10.6" fill="#ef8c58"/>
<text x="284.00" y="650.50" font-size="9.7" fill="#4a4f55" textLength="123.70" lengthAdjust="spacingAndGlyphs">Аномалия среднего уровня</text>
<rect x="264" y="660.8" width="10.9" height="10.6" fill="#c9474f"/>
<text x="284.00" y="669.30" font-size="9.7" fill="#4a4f55" textLength="123.70" lengthAdjust="spacingAndGlyphs">Аномалия высокого уровня</text>
</svg>
</body></html>
